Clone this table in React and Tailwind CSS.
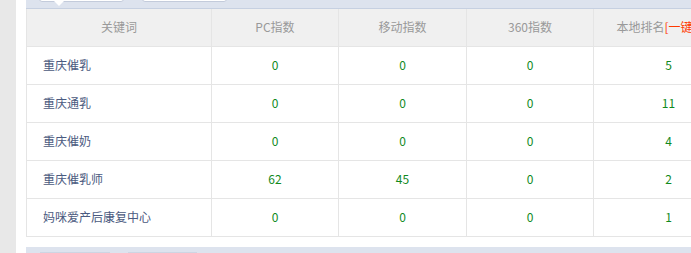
const rows = [
  { name: '重庆催乳', pc: 0, mobile: 0, s360: 0, local: 5 },
  { name: '重庆通乳', pc: 0, mobile: 0, s360: 0, local: 11 },
  { name: '重庆催奶', pc: 0, mobile: 0, s360: 0, local: 4 },
  { name: '重庆催乳师', pc: 62, mobile: 45, s360: 0, local: 2 },
  { name: '妈咪爱产后康复中心', pc: 0, mobile: 0, s360: 0, local: 1 },
]

// 顶部/底部的标签条
function TabBar({ top }) {
  if (top) {
    return (
      <div className="relative h-[9px] border-b border-[#c6d0e1] bg-[#dde3ee]">
        <div className="absolute left-[13px] top-[-6px] h-[8px] w-[85px] rounded-[3px] border border-[#c3cbdb] bg-white" />
        <div className="absolute left-[116px] top-[-6px] h-[8px] w-[85px] rounded-[3px] border border-[#c3cbdb] bg-white" />
        <div className="absolute left-[28px] top-[1px] h-0 w-0 border-x-[5px] border-t-[5px] border-x-transparent border-t-white" />
      </div>
    )
  }
  return (
    <div className="relative h-[6px] bg-[#dde3ee]">
      <div className="absolute left-[14px] top-[5px] h-[4px] w-[70px] bg-[#cdd5e3]" />
      <div className="absolute left-[102px] top-[5px] h-[4px] w-[69px] bg-[#cdd5e3]" />
    </div>
  )
}

export default function App() {
  return (
    <div
      className="flex h-[253px] w-[691px] overflow-hidden bg-white text-[12px]"
      style={{ fontFamily: '"Noto Sans CJK SC", "Liberation Sans", sans-serif' }}
    >
      <div className="w-4 shrink-0 bg-[#e8e8e8]" />
      <div className="ml-[10px] min-w-0 flex-1 overflow-hidden">
        <TabBar top />
        <table className="w-[717px] table-fixed border-collapse">
          <colgroup>
            <col className="w-[185px]" />
            <col className="w-[127px]" />
            <col className="w-[128px]" />
            <col className="w-[127px]" />
            <col className="w-[150px]" />
          </colgroup>
          <thead>
            <tr className="h-[37px] bg-[#f0f0f0] text-[#999]">
              <th className="border-x border-b border-[#e5e5e5] font-normal">关键词</th>
              <th className="border-x border-b border-[#e5e5e5] font-normal">PC指数</th>
              <th className="border-x border-b border-[#e5e5e5] font-normal">移动指数</th>
              <th className="border-x border-b border-[#e5e5e5] font-normal">360指数</th>
              <th className="whitespace-nowrap border-x border-b border-[#e5e5e5] font-normal">
                本地排名<span className="text-[#ff3a00]">[一键查询]</span>
              </th>
            </tr>
          </thead>
          <tbody>
            {rows.map((r) => (
              <tr key={r.name} className="h-[38px]">
                <td className="border border-[#e5e5e5] pl-4 text-[#4b5a80]">{r.name}</td>
                <td className="border border-[#e5e5e5] text-center text-[#118a1e]">{r.pc}</td>
                <td className="border border-[#e5e5e5] text-center text-[#118a1e]">{r.mobile}</td>
                <td className="border border-[#e5e5e5] text-center text-[#118a1e]">{r.s360}</td>
                <td className="border border-[#e5e5e5] text-center text-[#118a1e]">{r.local}</td>
              </tr>
            ))}
          </tbody>
        </table>
        <div className="h-[10px]" />
        <TabBar />
      </div>
    </div>
  )
}
